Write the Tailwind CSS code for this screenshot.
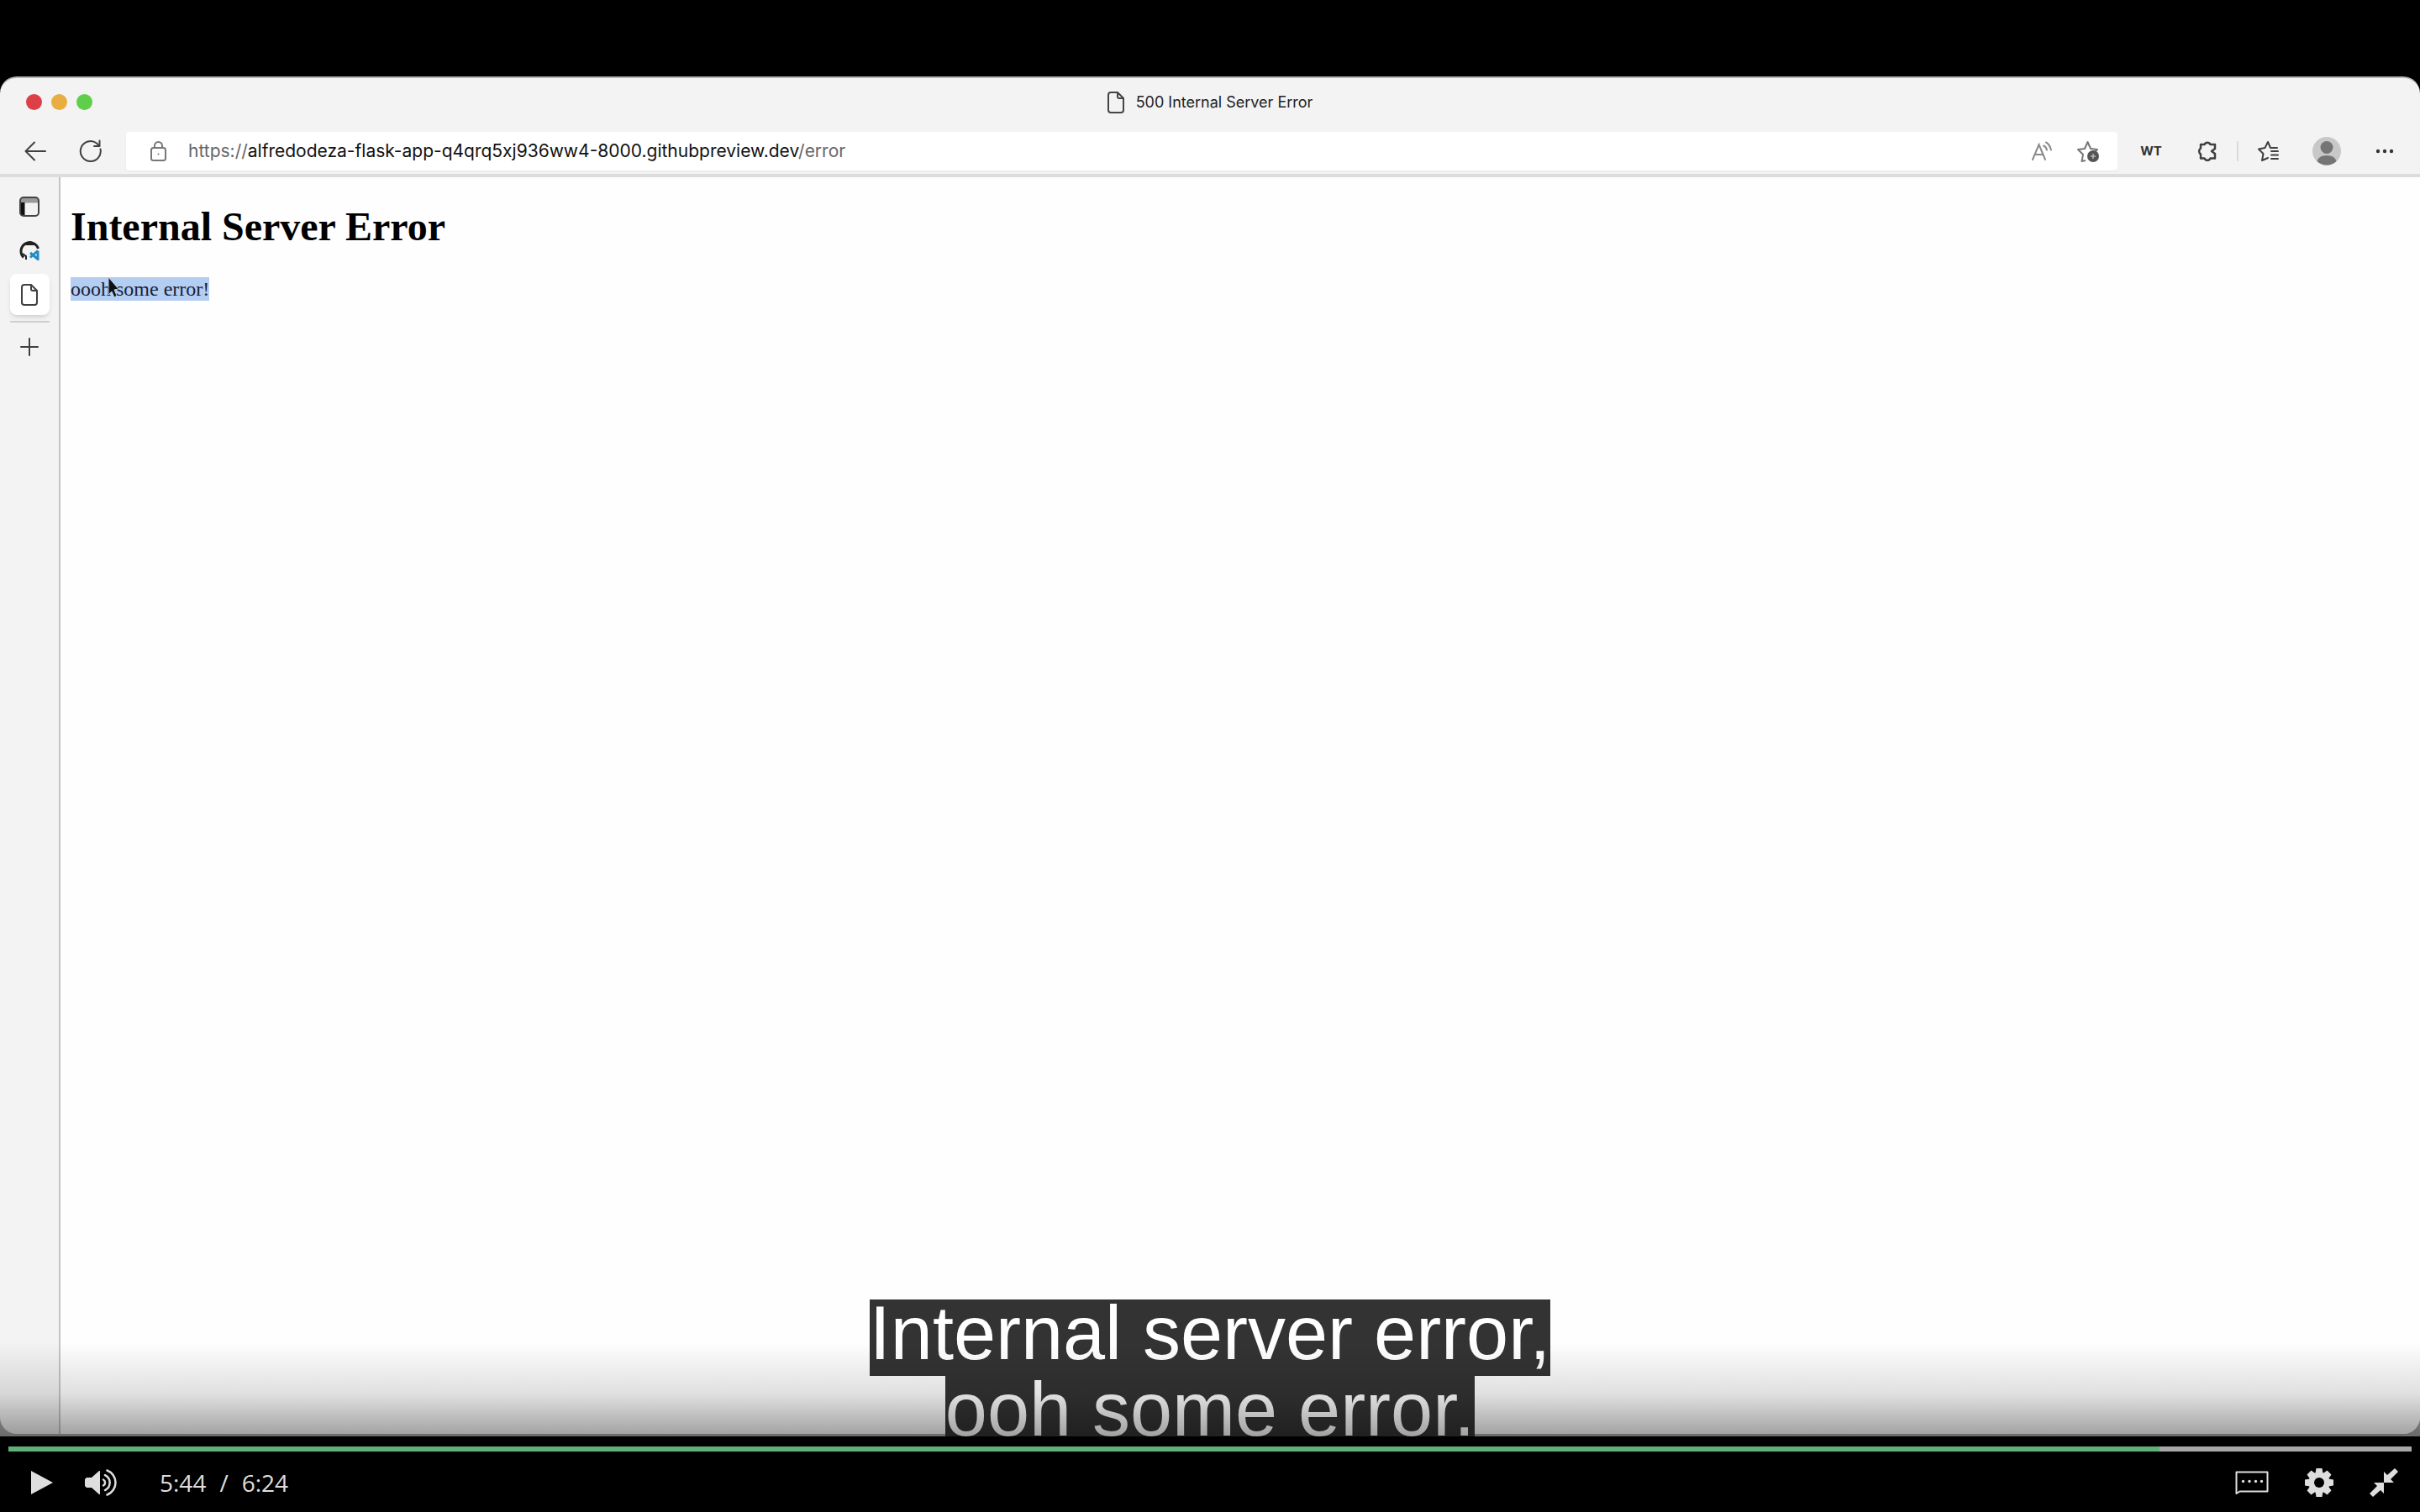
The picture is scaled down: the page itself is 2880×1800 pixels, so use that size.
<!DOCTYPE html>
<html lang="en">
<head>
<meta charset="utf-8">
<title>Video player</title>
<script src="https://cdn.jsdelivr.net/npm/@tailwindcss/browser@4"></script>
</head>
<body class="flex h-screen flex-col overflow-hidden bg-black">
<main class="relative flex min-h-0 flex-1 flex-col overflow-hidden pt-[91px]">
  <section class="flex min-h-0 flex-1 flex-col bg-linear-to-b from-black from-50% to-[#a8a8a8] to-50% pb-[3px]">
    <div class="flex min-h-0 flex-1 flex-col overflow-hidden rounded-[20px] border-t-2 border-[#b5b5b5] bg-[#f3f3f4] font-['Inter',sans-serif] text-[#404040]">
      <header class="shrink-0 border-b-4 border-[#dcdcdc]">
        <div class="grid h-16 grid-cols-[1fr_auto_1fr] items-center px-[31px] pb-[7px]">
          <div class="flex gap-[11px]">
            <button aria-label="Close" class="size-[19px] rounded-full bg-[#dc4046]"></button>
            <button aria-label="Minimize" class="size-[19px] rounded-full bg-[#e8ae42]"></button>
            <button aria-label="Zoom" class="size-[19px] rounded-full bg-[#5fcf4b]"></button>
          </div>
          <div class="flex items-center gap-3.5 text-lg text-[#222]">
            <svg class="h-[26px] w-5" viewBox="0 0 20 26" fill="none" stroke="#444" stroke-width="2"><path d="M4 1h8l7 7v14a3 3 0 0 1-3 3H4a3 3 0 0 1-3-3V4a3 3 0 0 1 3-3z"/><path d="M12 1v5a2 2 0 0 0 2 2h5"/></svg>
            <h2>500 Internal Server Error</h2>
          </div>
        </div>
        <nav class="flex h-[50px] items-start">
          <button aria-label="Back" class="ml-7 flex h-[46px] w-7 items-center justify-center"><svg class="size-[26px]" viewBox="0 0 26 26" fill="none" stroke="currentColor" stroke-width="2" stroke-linecap="round" stroke-linejoin="round"><path d="M25 13H2M12 2.500L1.500 13 12 23.500"/></svg></button>
          <button aria-label="Reload" class="ml-[38px] flex h-[46px] w-7 items-center justify-center"><svg class="size-7" viewBox="0 0 28 28" fill="none" stroke="currentColor" stroke-width="2" stroke-linecap="round" stroke-linejoin="round"><path d="M25.500 11.500A12 12 0 1 1 21 4.500l3 3"/><path d="M24.500 1.500v6.500h-6.500"/></svg></button>
          <div class="ml-[28px] flex h-[46px] flex-1 items-center rounded-sm bg-white pr-[21px] pl-[29px] shadow-xs">
            <svg class="mr-[26px] h-6 w-[19px] text-[#777]" viewBox="0 0 19 24" fill="none" stroke="currentColor" stroke-width="2"><rect x="1" y="8" width="17" height="15" rx="2.500"/><path d="M5 8V5.500a4.500 4.500 0 0 1 9 0V8"/><circle cx="9.500" cy="15.500" r="1" fill="currentColor" stroke="none"/></svg>
            <div role="textbox" aria-label="Address" class="flex-1 text-[21px] whitespace-nowrap text-[#666]">https://<span class="text-[#111]">alfredodeza-flask-app-q4qrq5xj936ww4-8000.githubpreview.dev</span>/error</div>
            <button aria-label="Read aloud" class="mr-7"><svg class="h-6 w-[26px] text-[#8a8a8a]" viewBox="0 0 26 24" fill="none" stroke="currentColor" stroke-width="2" stroke-linecap="round"><path d="M2 22L9.500 4 17 22M5 16h9"/><path d="M15 5.500q3 1 4 5M18 1.500q4 2 6 9"/></svg></button>
            <button aria-label="Add to favorites"><svg class="size-7 text-[#777]" viewBox="0 0 28 28" fill="none" stroke="currentColor" stroke-width="2" stroke-linejoin="round"><path d="M11 25l-4.500 1 1.500-8-6-6 8-1L13.500 3 17 11l8 1-3 3"/><circle cx="20" cy="20" r="7" fill="#555" stroke="none"/><path d="M20 17v6M17 20h6" stroke="#bbb" stroke-width="1.500"/></svg></button>
          </div>
          <div class="flex h-[46px] items-center pr-[31px] pl-[26px]">
            <button aria-label="WT extension" class="w-7 text-[15px] font-bold text-[#333]">WT</button>
            <button aria-label="Extensions" class="ml-10"><svg class="size-[26px]" viewBox="0 0 26 26" fill="none" stroke="currentColor" stroke-width="2.500" stroke-linejoin="round"><path d="M5 5h4.500a3.800 3.800 0 0 1 7 0H22v5l-4 3 4 3v5.500h-5.500a3.800 3.800 0 0 1-7 0H5v-5a4.200 4.200 0 0 1 0-7z"/></svg></button>
            <span class="ml-[22px] h-6 w-0.5 bg-[#dadada]"></span>
            <button aria-label="Favorites" class="ml-[22px]"><svg class="size-[26px]" viewBox="0 0 26 26" fill="none" stroke="currentColor" stroke-width="2" stroke-linecap="round" stroke-linejoin="round"><path d="M13 21l-7 3 1.500-8L2 10.500 9.500 9 13 2l3 7h8M17 13h8M17 17.500h8M17 22h8"/></svg></button>
            <button aria-label="Profile" class="ml-10"><svg class="size-[34px]" viewBox="0 0 34 34"><circle cx="17" cy="17" r="17" fill="#c8c8c8"/><circle cx="17" cy="12.500" r="7.500" fill="#757575"/><path d="M5.500 29q2-7 11.500-7t11.500 7a17 17 0 0 1-23 0z" fill="#757575"/></svg></button>
            <button aria-label="Settings and more" class="ml-[41px]"><svg class="h-6 w-[22px]" viewBox="0 0 22 24" fill="#333"><circle cx="3" cy="12" r="2.200"/><circle cx="11" cy="12" r="2.200"/><circle cx="19" cy="12" r="2.200"/></svg></button>
          </div>
        </nav>
      </header>
      <div class="flex min-h-0 flex-1">
        <aside class="flex w-[72px] shrink-0 flex-col items-center border-r-2 border-[#c4c4c6] pt-[23px]">
          <button aria-label="Tab actions"><svg class="size-6" viewBox="0 0 24 24" fill="none" stroke="#444" stroke-width="2"><path d="M2 4.500h20" stroke="#999" stroke-width="6"/><path d="M4 7v15" stroke="#111" stroke-width="5"/><rect x="1" y="1" width="22" height="22" rx="4"/></svg></button>
          <button aria-label="Codespace tab" class="mt-[26px]"><svg class="size-[26px]" viewBox="0 0 26 26" fill="none"><path d="M6 22.500A10.500 10.500 0 1 1 23.500 12" stroke="#222" stroke-width="3"/><path d="M5 8q1-4 5-2h6q4-2 5 2" fill="#222"/><path d="M5 18l4 3v4" stroke="#222" stroke-width="2"/><path d="M23 14.500v10l-9-7.500M23 14.500l-9 8" stroke="#218bc5" stroke-width="3"/></svg></button>
          <button aria-label="500 Internal Server Error tab" class="mt-4 flex h-[49px] w-[47px] items-center justify-center rounded-lg bg-white shadow-md"><svg class="h-[26px] w-5" viewBox="0 0 20 26" fill="none" stroke="currentColor" stroke-width="2"><path d="M4 1h8l7 7v14a3 3 0 0 1-3 3H4a3 3 0 0 1-3-3V4a3 3 0 0 1 3-3z"/><path d="M12 1v5a2 2 0 0 0 2 2h5"/></svg></button>
          <span class="mt-[7px] h-0.5 w-[47px] bg-[#cfcfcf]"></span>
          <button aria-label="New tab" class="mt-[18px]"><svg class="size-[22px]" viewBox="0 0 22 22" stroke="currentColor" stroke-width="2" stroke-linecap="round"><path d="M11 1v20M1 11h20"/></svg></button>
        </aside>
        <article class="flex-1 bg-[#fefefe] pt-[31px] pl-3 font-['Liberation_Serif',serif] text-black">
          <h1 class="text-5xl leading-14 font-bold">Internal Server Error</h1>
          <p class="relative mt-8 w-fit bg-[#b3cdf3] text-2xl leading-7 text-[#182338]">oooh some error!
            <svg class="absolute top-0 left-11 h-[26px] w-4" viewBox="0 0 16 26" fill="#111"><path d="M1 0l12 14-5 1 3 7-3 2-3-7-4 4z" stroke="#b3cdf3" stroke-width="1"/></svg>
          </p>
        </article>
      </div>
    </div>
  </section>
  <div class="absolute inset-x-0 -bottom-[19px] flex flex-col items-center font-['Liberation_Sans',sans-serif] text-[90px] leading-[81px] text-white">
    <p class="bg-[#333] pb-2.5">Internal server error,</p>
    <p class="bg-[#333] pb-2.5">ooh some error.</p>
  </div>
  <div class="pointer-events-none absolute inset-x-0 bottom-0 h-28 bg-linear-to-b from-black/0 via-black/12 via-55% to-black/37"></div>
</main>
<footer class="flex h-[90px] shrink-0 flex-col px-2.5 pt-3 text-[#dedede]">
  <input type="range" aria-label="Seek" min="0" max="384" value="344" class="block h-1.5 w-full shrink-0 appearance-none bg-linear-to-r from-[#60b079] from-[89.5%] to-[#a8a6a8] to-[89.5%] [&::-webkit-slider-thumb]:size-0 [&::-webkit-slider-thumb]:appearance-none">
  <div class="flex flex-1 items-center pt-0.5 pr-4 pl-[27px]">
    <button aria-label="Play"><svg class="h-7 w-[26px]" viewBox="0 0 26 28" fill="currentColor"><path d="M0 0l26 14L0 28z"/></svg></button>
    <button aria-label="Mute" class="ml-[38px]"><svg class="h-8 w-[38px]" viewBox="0 0 38 32" fill="none" stroke="currentColor" stroke-width="2.500" stroke-linecap="round"><path d="M2 10h6l9-8h1v28h-1l-9-8H2l-2-2v-8z" fill="currentColor" stroke="none"/><path d="M22 12.500a4 4 0 0 1 0 7M24 7a10 10 0 0 1 0 18M26.500 1.500a15.500 15.500 0 0 1 0 29"/></svg></button>
    <div class="ml-[51px] flex gap-4 font-['Open_Sans',sans-serif] text-[28px] leading-9"><span>5:44</span><span>/</span><span>6:24</span></div>
    <button aria-label="Captions" class="ml-auto"><svg class="h-[30px] w-10" viewBox="0 0 40 30" fill="none" stroke="currentColor" stroke-width="2" stroke-linejoin="round"><path d="M1.500 28V2.500h37v23H5.500z"/><g fill="currentColor" stroke="none"><circle cx="9.500" cy="13.500" r="1.700"/><circle cx="17" cy="13.500" r="1.700"/><circle cx="24.500" cy="13.500" r="1.700"/><circle cx="31.500" cy="13.500" r="1.700"/></g></svg></button>
    <button aria-label="Settings" class="ml-[43px]"><svg class="size-[34px]" viewBox="-17 -17 34 34"><g fill="currentColor"><circle r="12.500"/><path id="tooth" d="M-3.500-17h7l1 6h-9z"/><use href="#tooth" transform="rotate(45)"/><use href="#tooth" transform="rotate(90)"/><use href="#tooth" transform="rotate(135)"/><use href="#tooth" transform="rotate(180)"/><use href="#tooth" transform="rotate(225)"/><use href="#tooth" transform="rotate(270)"/><use href="#tooth" transform="rotate(315)"/></g><circle r="6" fill="#000"/></svg></button>
    <button aria-label="Exit full screen" class="ml-[43px]"><svg class="size-[34px]" viewBox="0 0 34 34" fill="currentColor"><path d="M17 4l4 4 9-8 4 4-9 9 4 4H17zM17 30l-4-4-9 8-4-4 9-9-4-4h12z"/></svg></button>
  </div>
</footer>
</body>
</html>
